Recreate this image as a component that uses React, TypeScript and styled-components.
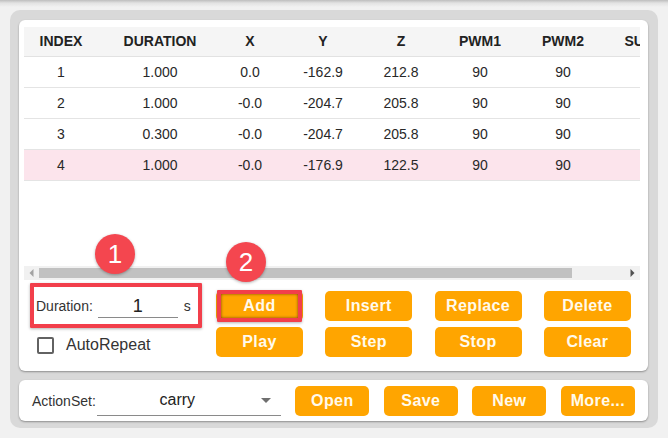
import React from 'react';
import styled, { createGlobalStyle } from 'styled-components';

const GlobalStyle = createGlobalStyle`
  html, body { margin: 0; padding: 0; }
  body {
    width: 668px;
    height: 438px;
    overflow: hidden;
    background: linear-gradient(#bdbdbd 0px, #e2e2e2 3px, #f1f1f1 7px, #f1f1f1 100%);
    font-family: "Liberation Sans", Arial, sans-serif;
  }
  * { box-sizing: border-box; }
`;

const Frame = styled.div`
  position: relative;
  margin: 10px 0 0 10px;
  width: 648px;
  height: 418px;
  background: #d9d9d9;
  border-radius: 10px;
  padding: 10px 10px 0 9px;
  display: flex;
  flex-direction: column;
  gap: 9px;
`;

const Panel = styled.div`
  background: #ffffff;
  border-radius: 6px;
  box-shadow: 0 1px 2px rgba(0, 0, 0, 0.35);
`;

const TopPanel = styled(Panel)`
  display: flex;
  flex-direction: column;
  height: 351px;
`;

const TablePane = styled.div`
  padding: 7px 8px 4px 5px;
  display: flex;
  flex-direction: column;
`;

const Viewport = styled.div`
  width: 616px;
  height: 239px;
  overflow: hidden;
`;

const Table = styled.table`
  table-layout: fixed;
  border-collapse: collapse;
  width: 677px;
`;

const Th = styled.th<{ $pad?: number }>`
  height: 29px;
  padding: 0 0 0 ${(p) => p.$pad ?? 0}px;
  background: #f5f5f5;
  font-size: 14px;
  font-weight: bold;
  color: #222;
  text-align: center;
  white-space: nowrap;
  overflow: visible;
  border-bottom: 1px solid #e2e2e2;
`;

const Tr = styled.tr<{ $selected?: boolean }>`
  background: ${(p) => (p.$selected ? '#fce4ec' : '#ffffff')};
`;

const Td = styled.td`
  height: 31px;
  padding: 0;
  font-size: 14px;
  color: #282828;
  text-align: center;
  white-space: nowrap;
  border-bottom: 1px solid #e4e4e4;
`;

const ScrollBar = styled.div`
  display: flex;
  height: 14px;
  width: 616px;
  background: #f1f1f1;
`;

const ScrollArrow = styled.div`
  width: 15px;
  display: flex;
  align-items: center;
  justify-content: center;
  flex: none;
`;

const ScrollTrack = styled.div`
  flex: 1;
  padding: 2px 0;
  display: flex;
`;

const Thumb = styled.div`
  height: 100%;
  background: #c1c1c1;
`;

const Divider = styled.div`
  height: 1px;
  background: #9e9e9e;
`;

const Controls = styled.div`
  display: flex;
  padding: 7px 17px 13px 17px;
`;

const LeftColumn = styled.div`
  width: 180px;
  display: flex;
  flex-direction: column;
`;

const DurationRow = styled.div`
  height: 30px;
  display: flex;
  align-items: center;
`;

const Label = styled.span`
  font-size: 14px;
  color: #333;
`;

const DurationInput = styled.div`
  width: 80px;
  height: 22px;
  margin-left: 5px;
  margin-top: 1px;
  border-bottom: 1px solid #8a8a8a;
  font-size: 18px;
  line-height: 21px;
  text-align: center;
  color: #222;
`;

const Unit = styled.span`
  margin-left: 6px;
  font-size: 14px;
  color: #333;
`;

const RepeatRow = styled.label`
  margin-top: 9px;
  height: 30px;
  display: flex;
  align-items: center;
  padding-left: 1px;
`;

const CheckBox = styled.span`
  width: 17px;
  height: 17px;
  border: 2px solid #626262;
  border-radius: 2px;
  flex: none;
`;

const CheckLabel = styled.span`
  margin-left: 12px;
  font-size: 16px;
  color: #333;
`;

const ButtonGrid = styled.div`
  display: grid;
  grid-template-columns: repeat(4, 87px);
  grid-auto-rows: 30px;
  column-gap: 22.3px;
  row-gap: 6px;
`;

const ActionButton = styled.button<{ $w?: number }>`
  width: ${(p) => (p.$w ? `${p.$w}px` : '100%')};
  height: 30px;
  padding: 0;
  border: none;
  border-radius: 5px;
  background: #ffa500;
  color: #fffaec;
  font-family: "Liberation Sans", Arial, sans-serif;
  font-size: 16px;
  font-weight: bold;
  letter-spacing: 0.4px;
  cursor: pointer;
`;

const BottomPanel = styled(Panel)`
  height: 41px;
  display: flex;
  align-items: center;
  padding: 0 13px;
`;

const Select = styled.div`
  width: 184px;
  height: 30px;
  margin-left: 1.5px;
  border-bottom: 1px solid #8a8a8a;
  display: flex;
  align-items: center;
`;

const SelectValue = styled.span`
  flex: 1;
  text-align: center;
  font-size: 16px;
  color: #222;
  padding-left: 2px;
`;

const SelectArrow = styled.span`
  width: 26px;
  display: flex;
  justify-content: center;
  padding-right: 4px;
`;

const BottomButtons = styled.div`
  display: flex;
  gap: 14.5px;
  margin-left: 14px;
`;

const Highlight = styled.div<{ $x: number; $y: number; $w: number; $h: number; $inset?: boolean }>`
  position: absolute;
  left: ${(p) => p.$x}px;
  top: ${(p) => p.$y}px;
  width: ${(p) => p.$w}px;
  height: ${(p) => p.$h}px;
  border: 4px solid #f23f4b;
  border-radius: 1px;
  box-shadow: 0 1px 3px rgba(0, 0, 0, 0.3)
    ${(p) => (p.$inset ? ', inset 0 0 3px rgba(0,0,0,0.55)' : '')};
  pointer-events: none;
`;

const Badge = styled.div<{ $x: number; $y: number }>`
  position: absolute;
  left: ${(p) => p.$x}px;
  top: ${(p) => p.$y}px;
  width: 40px;
  height: 40px;
  border-radius: 50%;
  background: #f4464f;
  color: #ffffff;
  font-size: 26px;
  line-height: 40px;
  text-align: center;
  box-shadow: 0 1px 3px rgba(0, 0, 0, 0.3);
`;

const columns = [
  { name: 'INDEX', w: 74, pad: 0 },
  { name: 'DURATION', w: 124, pad: 0 },
  { name: 'X', w: 56, pad: 0 },
  { name: 'Y', w: 90, pad: 0 },
  { name: 'Z', w: 66, pad: 0 },
  { name: 'PWM1', w: 92, pad: 0 },
  { name: 'PWM2', w: 74, pad: 0 },
  { name: 'SUCTION', w: 101, pad: 11 },
];

const rows = [
  ['1', '1.000', '0.0', '-162.9', '212.8', '90', '90', ''],
  ['2', '1.000', '-0.0', '-204.7', '205.8', '90', '90', ''],
  ['3', '0.300', '-0.0', '-204.7', '205.8', '90', '90', ''],
  ['4', '1.000', '-0.0', '-176.9', '122.5', '90', '90', ''],
];

const actions = ['Add', 'Insert', 'Replace', 'Delete', 'Play', 'Step', 'Stop', 'Clear'];
const fileActions = ['Open', 'Save', 'New', 'More...'];

const contentWidth = columns.reduce((s, c) => s + c.w, 0);
const viewWidth = 616;

export default function App() {
  const thumbPct = (viewWidth / contentWidth) * 100;
  return (
    <>
      <GlobalStyle />
      <Frame>
        <TopPanel>
          <TablePane>
            <Viewport>
              <Table>
                <colgroup>
                  {columns.map((c) => (
                    <col key={c.name} style={{ width: c.w }} />
                  ))}
                </colgroup>
                <thead>
                  <tr>
                    {columns.map((c) => (
                      <Th key={c.name} $pad={c.pad}>
                        {c.name}
                      </Th>
                    ))}
                  </tr>
                </thead>
                <tbody>
                  {rows.map((r, i) => (
                    <Tr key={i} $selected={i === 3}>
                      {r.map((v, j) => (
                        <Td key={j}>{v}</Td>
                      ))}
                    </Tr>
                  ))}
                </tbody>
              </Table>
            </Viewport>
            <ScrollBar>
              <ScrollArrow>
                <svg width="5" height="8" viewBox="0 0 5 8">
                  <path d="M4.5 0 L0.5 4 L4.5 8 Z" fill="#a3a3a3" />
                </svg>
              </ScrollArrow>
              <ScrollTrack>
                <Thumb style={{ width: `${thumbPct}%` }} />
              </ScrollTrack>
              <ScrollArrow>
                <svg width="5" height="8" viewBox="0 0 5 8">
                  <path d="M0.5 0 L4.5 4 L0.5 8 Z" fill="#505050" />
                </svg>
              </ScrollArrow>
            </ScrollBar>
          </TablePane>
          <Divider />
          <Controls>
            <LeftColumn>
              <DurationRow>
                <Label>Duration:</Label>
                <DurationInput>1</DurationInput>
                <Unit>s</Unit>
              </DurationRow>
              <RepeatRow>
                <CheckBox />
                <CheckLabel>AutoRepeat</CheckLabel>
              </RepeatRow>
            </LeftColumn>
            <ButtonGrid>
              {actions.map((a) => (
                <ActionButton key={a}>{a}</ActionButton>
              ))}
            </ButtonGrid>
          </Controls>
        </TopPanel>
        <BottomPanel>
          <Label>ActionSet:</Label>
          <Select>
            <SelectValue>carry</SelectValue>
            <SelectArrow>
              <svg width="10" height="5" viewBox="0 0 10 5">
                <path d="M0 0 L10 0 L5 5 Z" fill="#6f6f6f" />
              </svg>
            </SelectArrow>
          </Select>
          <BottomButtons>
            {fileActions.map((a) => (
              <ActionButton key={a} $w={74}>
                {a}
              </ActionButton>
            ))}
          </BottomButtons>
        </BottomPanel>
        <Highlight $x={20} $y={273} $w={172} $h={45} />
        <Highlight $x={207} $y={280} $w={85} $h={32} $inset />
        <Badge $x={85} $y={224}>1</Badge>
        <Badge $x={216} $y={232}>2</Badge>
      </Frame>
    </>
  );
}
